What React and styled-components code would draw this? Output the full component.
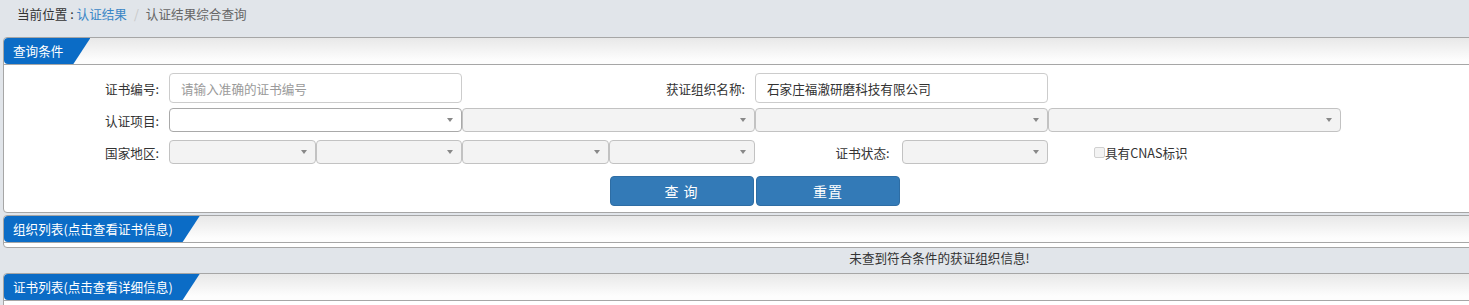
import React from 'react'
import styled, { createGlobalStyle } from 'styled-components'

const GlobalStyle = createGlobalStyle`
  html, body {
    margin: 0;
    padding: 0;
    overflow: hidden;
    background: #e1e5ea;
  }
  body {
    font-family: "Noto Sans CJK SC", "Microsoft YaHei", sans-serif;
    font-size: 12.6px;
    color: #333;
  }
`

const Page = styled.div`
  width: 1876px;
`

const Breadcrumb = styled.div`
  height: 37px;
  box-sizing: border-box;
  padding: 5px 0 0 17px;
  line-height: 18px;

  a {
    color: #3a86c6;
    text-decoration: none;
  }
  .sep {
    color: #c8c8c8;
    padding: 0 7px;
  }
  .active {
    color: #666;
  }
`

const Panel = styled.section`
  margin: ${p => p.$gap || 0}px 0 0 3px;
  background: #fff;
  border: 1px solid #a6a6a6;
  border-radius: 4px;
`

const PanelHead = styled.div`
  display: flex;
  height: 26px;
  border-bottom: 1px solid #a6a6a6;
  border-radius: 4px 4px 0 0;
  background: linear-gradient(to bottom, #e8e8e8, #fdfdfd 85%);
`

const Tab = styled.div`
  padding: 0 27px 0 9px;
  line-height: 26px;
  color: #fff;
  background: #0b6cc6;
  border-radius: 4px 0 0 4px;
  clip-path: polygon(0 0, 100% 0, calc(100% - 17px) 100%, 0 100%);
  white-space: nowrap;
`

const PanelBody = styled.div`
  height: ${p => p.$h}px;
`

const Form = styled.div`
  display: grid;
  grid-template-columns: 165px repeat(8, 146.5px);
  grid-template-rows: 35px 32px 36px 30px;
  padding: 8px 0 6px;
`

const Label = styled.label`
  grid-column: ${p => (p.$first ? '1 / span 1' : `span ${p.$span || 1}`)};
  height: ${p => p.$h}px;
  display: flex;
  align-items: center;
  justify-content: flex-end;
  padding-right: ${p => p.$pr || 10}px;
  white-space: nowrap;
`

const TextInput = styled.input`
  grid-column: span 2;
  height: 30px;
  box-sizing: border-box;
  padding: 0 11px;
  border: 1px solid #ccc;
  border-radius: 4px;
  font: inherit;
  color: #333;
  outline: none;

  &::placeholder {
    color: #9a9a9a;
  }
`

const SelectBox = styled.div`
  grid-column: span ${p => p.$span || 1};
  position: relative;
  height: 24px;

  select {
    width: 100%;
    height: 100%;
    box-sizing: border-box;
    appearance: none;
    border: 1px solid #a9a9a9;
    border-radius: 4px;
    background: ${p => (p.$disabled ? '#eee' : '#fff')};
    font: inherit;
    outline: none;
  }

  &::after {
    content: '';
    position: absolute;
    right: 9px;
    top: 10px;
    border-style: solid;
    border-color: #888 transparent transparent;
    border-width: 4px 3px 0;
  }
`

const Check = styled.label`
  grid-column: span 2;
  display: flex;
  align-items: center;
  height: 24px;
  padding-left: 46px;
  white-space: nowrap;

  input {
    appearance: none;
    width: 11px;
    height: 11px;
    margin: 0;
    border: 1px solid #d0d0d0;
    border-radius: 2px;
    background: #f3f3f3;
  }
`

const Button = styled.button`
  grid-column: ${p => p.$col};
  width: 144px;
  height: 30px;
  margin-left: 1px;
  padding: 0;
  background: #337ab7;
  border: 1px solid #2e6da4;
  border-radius: 4px;
  color: #fff;
  font: inherit;
  font-size: 14px;
  letter-spacing: 1px;
`

const Empty = styled.div`
  margin-left: 3px;
  height: 25px;
  line-height: 20px;
  text-align: center;
`

function Select({ span, disabled }) {
  return (
    <SelectBox $span={span} $disabled={disabled}>
      <select disabled={disabled}>
        <option></option>
      </select>
    </SelectBox>
  )
}

function App() {
  return (
    <Page>
      <GlobalStyle />
      <Breadcrumb>
        当前位置 : <a href="#">认证结果</a>
        <span className="sep">/</span>
        <span className="active">认证结果综合查询</span>
      </Breadcrumb>

      <Panel>
        <PanelHead>
          <Tab>查询条件</Tab>
        </PanelHead>
        <Form>
          <Label $first $h={30}>证书编号:</Label>
          <TextInput placeholder="请输入准确的证书编号" />
          <Label $span={2} $h={30}>获证组织名称:</Label>
          <TextInput defaultValue="石家庄福澈研磨科技有限公司" />

          <Label $first $h={24}>认证项目:</Label>
          <Select span={2} />
          <Select span={2} disabled />
          <Select span={2} disabled />
          <Select span={2} disabled />

          <Label $first $h={24}>国家地区:</Label>
          <Select disabled />
          <Select disabled />
          <Select disabled />
          <Select disabled />
          <Label $h={24} $pr={12}>证书状态:</Label>
          <Select disabled />
          <Check>
            <input type="checkbox" disabled />
            具有CNAS标识
          </Check>

          <Button $col={5}>查 询</Button>
          <Button $col={6}>重置</Button>
        </Form>
      </Panel>

      <Panel $gap={2}>
        <PanelHead>
          <Tab>组织列表(点击查看证书信息)</Tab>
        </PanelHead>
        <PanelBody $h={4} />
      </Panel>
      <Empty>未查到符合条件的获证组织信息!</Empty>

      <Panel>
        <PanelHead>
          <Tab>证书列表(点击查看详细信息)</Tab>
        </PanelHead>
        <PanelBody $h={40} />
      </Panel>
    </Page>
  )
}

export default App
